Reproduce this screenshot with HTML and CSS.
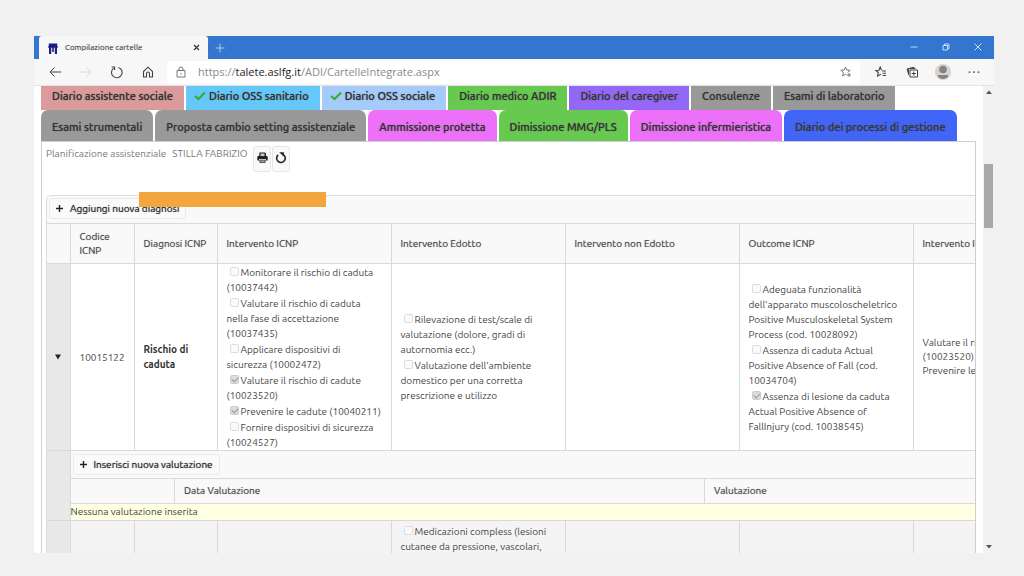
FILE: index.html
```html
<!DOCTYPE html>
<html lang="it">
<head>
<meta charset="utf-8">
<title>Compilazione cartelle</title>
<link rel="stylesheet" href="styles.css">
</head>
<body>
<div class="window">
  <header class="titlebar">
    <div class="browser-tab">
      <svg class="favicon" viewBox="0 0 10 12"><path d="M.8 1.500h8.400V4H.8zM.3 4h9.400v1.800H.3zM1 5.500h2.200V12H1zM4.200 5.500h1.600V10H4.200zM6.800 5.500H9V12H6.800z" fill="#1b1b86"/></svg>
      <span class="browser-tab-title">Compilazione cartelle</span>
      <button class="plain" aria-label="Chiudi scheda"><svg width="7" height="7" viewBox="0 0 7 7"><path d="M1 1l5 5M6 1L1 6" stroke="#333" stroke-width="1.200"/></svg></button>
    </div>
    <button class="plain new-tab" aria-label="Nuova scheda"><svg width="10" height="10" viewBox="0 0 10 10"><path d="M5 .5v9M.5 5h9" stroke="#a9cdf3"/></svg></button>
    <div class="window-controls">
      <button class="plain" aria-label="Riduci"><svg width="8" height="8" viewBox="0 0 8 8"><path d="M.5 4h7" stroke="#b9daf8"/></svg></button>
      <button class="plain" aria-label="Ripristina"><svg width="8" height="8" viewBox="0 0 8 8"><path d="M1 2.500h4.500V7H1zM2.500 2.500V1H7v4.500H5.500" fill="none" stroke="#c4e0fa"/></svg></button>
      <button class="plain" aria-label="Chiudi"><svg width="8" height="8" viewBox="0 0 8 8"><path d="M.5.5l7 7M7.500.5l-7 7" stroke="#c4e0fa"/></svg></button>
    </div>
  </header>
  <nav class="toolbar">
    <button class="plain" aria-label="Indietro"><svg width="12" height="12" viewBox="0 0 12 12"><path d="M12 6H1M5.500 1.500L1 6l4.500 4.500" fill="none" stroke="#444"/></svg></button>
    <button class="plain" aria-label="Avanti"><svg width="12" height="12" viewBox="0 0 12 12"><path d="M0 6h11M6.500 1.500L11 6l-4.500 4.500" fill="none" stroke="#d8d8d8"/></svg></button>
    <button class="plain" aria-label="Aggiorna"><svg width="13" height="13" viewBox="0 0 13 13"><path d="M3.600 2.200A5.300 5.300 0 1 0 8.400 1.400M1.600 1h3v3" fill="none" stroke="#444" stroke-width="1.100"/></svg></button>
    <button class="plain" aria-label="Pagina iniziale"><svg width="12" height="12" viewBox="0 0 12 12"><path d="M1.500 5.500L6 1.200l4.500 4.300V11h-3V7.500a1.500 1.500 0 0 0-3 0V11h-3z" fill="none" stroke="#444" stroke-width="1.100"/></svg></button>
    <div class="address">
      <svg width="10" height="12" viewBox="0 0 10 12"><path d="M1 4.500h8V11H1zM3 4.500V3a2 2 0 0 1 4 0v1.500" fill="none" stroke="#777"/><path d="M4.500 7h1v1.500h-1z" fill="#777"/></svg>
      <span class="url">https://<b>talete.aslfg.it</b>/ADI/CartelleIntegrate.aspx</span>
      <button class="plain" aria-label="Aggiungi ai preferiti"><svg width="12" height="12" viewBox="0 0 12 12"><path d="M5.500 1l1.300 3 3.400.3-2.600 2.200M5.500 1L4.200 4l-3.400.3 2.600 2.200-.8 3.500 2.900-1.800 1 .6M9 7v4M7 9h4" fill="none" stroke="#777"/></svg></button>
    </div>
    <div class="tools">
      <button class="plain" aria-label="Preferiti"><svg width="12" height="12" viewBox="0 0 12 12"><path d="M6.500 4.300L5.200 1 4 4.300.8 4.500l2.500 2-.8 3.500L6 8.200M7 5h4M7.500 7.200H11M7.500 9.500H11" fill="none" stroke="#444" stroke-width="1.100"/></svg></button>
      <button class="plain" aria-label="Raccolte"><svg width="12" height="12" viewBox="0 0 12 12"><path d="M4 4h7.500v7H4zM7.800 5.500v4M5.800 7.500h4M2.800 8.800L1 3l7-1.800.5 1.500M2.500 9V2.600h7" fill="none" stroke="#444"/></svg></button>
      <button class="plain" aria-label="Profilo"><svg width="16" height="16" viewBox="0 0 16 16"><circle cx="8" cy="8" r="8" fill="#d6d3d0"/><circle cx="8" cy="5.500" r="3.800" fill="#858280"/><path d="M3 11h10v2Q8 17 3 13z" fill="#858280"/></svg></button>
      <button class="plain" aria-label="Altro"><svg width="12" height="4" viewBox="0 0 12 4"><path d="M.5 1.500h2v1.300h-2zM5 1.500h2v1.300H5zM9.500 1.500h2v1.300h-2z" fill="#555"/></svg></button>
    </div>
  </nav>
  <div class="viewport">
    <main class="page">
      <nav class="tabs tabs-upper">
        <a href="#" class="tab rose">Diario assistente sociale</a>
        <a href="#" class="tab sky"><svg class="check" viewBox="0 0 12 10"><path d="M1 5l3.500 3L11 1.500" fill="none" stroke="#35ad35" stroke-width="2.200"/></svg>Diario OSS sanitario</a>
        <a href="#" class="tab pale"><svg class="check" viewBox="0 0 12 10"><path d="M1 5l3.500 3L11 1.500" fill="none" stroke="#35ad35" stroke-width="2.200"/></svg>Diario OSS sociale</a>
        <a href="#" class="tab green">Diario medico ADIR</a>
        <a href="#" class="tab violet">Diario del caregiver</a>
        <a href="#" class="tab grey">Consulenze</a>
        <a href="#" class="tab grey">Esami di laboratorio</a>
      </nav>
      <nav class="tabs tabs-lower">
        <a href="#" class="tab grey">Esami strumentali</a>
        <a href="#" class="tab grey">Proposta cambio setting assistenziale</a>
        <a href="#" class="tab pink">Ammissione protetta</a>
        <a href="#" class="tab green">Dimissione MMG/PLS</a>
        <a href="#" class="tab pink">Dimissione infermieristica</a>
        <a href="#" class="tab blue">Diario dei processi di gestione</a>
      </nav>
      <section class="panel">
        <div class="patient">
          <span>Planificazione assistenziale</span>
          <span>STILLA FABRIZIO</span>
          <div class="patient-actions">
            <button class="icon-button" aria-label="Stampa"><svg width="11" height="11" viewBox="0 0 11 11"><path d="M2.500.5h5.500l1 1V4h-7zM.3 5q0-1 1-1h8.400q1 0 1 1v3.500H9V7H2v1.500H.3zM2.500 7.700h6v3h-6z" fill="#222"/><path d="M3.500 1.500h4V4h-4zM3.300 8.500h4.400v1.200H3.300z" fill="#ccc"/></svg></button>
            <button class="icon-button" aria-label="Ricarica"><svg width="12" height="12" viewBox="0 0 12 12"><path d="M7.500 2.200A4.300 4.300 0 1 1 3.200 2.900" fill="none" stroke="#222" stroke-width="1.600"/><path d="M4.200.2h4.600v4.200z" fill="#222"/></svg></button>
          </div>
        </div>
        <div class="grid">
          <div class="grid-bar">
            <button class="add"><svg width="7" height="7" viewBox="0 0 7 7"><path d="M3.500 0v7M0 3.500h7" stroke="#222" stroke-width="1.400"/></svg>Aggiungi nuova diagnosi</button>
            <div class="redaction"></div>
          </div>
          <table class="diagnoses">
            <colgroup><col class="c-toggle"><col class="c-code"><col class="c-diagnosis"><col class="c-wide"><col class="c-wide"><col class="c-wide"><col class="c-wide"><col class="c-wide"></colgroup>
            <thead>
              <tr><th></th><th>Codice ICNP</th><th class="nowrap">Diagnosi ICNP</th><th>Intervento ICNP</th><th>Intervento Edotto</th><th>Intervento non Edotto</th><th>Outcome ICNP</th><th>Intervento ICNP</th></tr>
            </thead>
            <tbody>
              <tr>
                <td class="toggle"><button class="plain" aria-label="Comprimi"><svg width="6" height="6" viewBox="0 0 6 6"><path d="M0 .5h6L3 5.500z" fill="#222"/></svg></button></td>
                <td>10015122</td>
                <td><strong>Rischio di caduta</strong></td>
                <td>
                  <label><input type="checkbox" disabled>Monitorare il rischio di caduta (10037442)</label>
                  <label><input type="checkbox" disabled>Valutare il rischio di caduta nella fase di accettazione (10037435)</label>
                  <label><input type="checkbox" disabled>Applicare dispositivi di sicurezza (10002472)</label>
                  <label><input type="checkbox" disabled checked>Valutare il rischio di cadute (10023520)</label>
                  <label><input type="checkbox" disabled checked>Prevenire le cadute (10040211)</label>
                  <label><input type="checkbox" disabled>Fornire dispositivi di sicurezza (10024527)</label>
                </td>
                <td>
                  <label><input type="checkbox" disabled>Rilevazione di test/scale di valutazione (dolore, gradi di autornomia ecc.)</label>
                  <label><input type="checkbox" disabled>Valutazione dell'ambiente domestico per una corretta prescrizione e utilizzo</label>
                </td>
                <td></td>
                <td>
                  <label><input type="checkbox" disabled>Adeguata funzionalità dell'apparato muscoloscheletrico Positive Musculoskeletal System Process (cod. 10028092)</label>
                  <label><input type="checkbox" disabled>Assenza di caduta Actual Positive Absence of Fall (cod. 10034704)</label>
                  <label><input type="checkbox" disabled checked>Assenza di lesione da caduta Actual Positive Absence of FallInjury (cod. 10038545)</label>
                </td>
                <td class="nowrap">Valutare il rischio di cadute<br>(10023520)<br>Prevenire le cadute</td>
              </tr>
              <tr>
                <td class="toggle"></td>
                <td class="detail" colspan="7">
                  <div class="detail-bar">
                    <button class="add"><svg width="7" height="7" viewBox="0 0 7 7"><path d="M3.500 0v7M0 3.500h7" stroke="#222" stroke-width="1.400"/></svg>Inserisci nuova valutazione</button>
                  </div>
                  <table class="evaluations">
                    <colgroup><col class="c-actions"><col class="c-date"><col></colgroup>
                    <thead><tr><th></th><th>Data Valutazione</th><th>Valutazione</th></tr></thead>
                    <tbody><tr><td colspan="3" class="empty">Nessuna valutazione inserita</td></tr></tbody>
                  </table>
                </td>
              </tr>
              <tr class="alternate">
                <td class="toggle"></td><td></td><td></td><td></td>
                <td><label><input type="checkbox" disabled>Medicazioni compless (lesioni cutanee da pressione, vascolari,</label></td>
                <td></td><td></td><td></td>
              </tr>
            </tbody>
          </table>
        </div>
      </section>
    </main>
    <div class="scrollbar">
      <svg width="6" height="4" viewBox="0 0 6 4"><path d="M0 4l3-3.500L6 4z" fill="#555"/></svg>
      <div class="thumb"></div>
      <svg class="down" width="6" height="4" viewBox="0 0 6 4"><path d="M0 0l3 3.500L6 0z" fill="#555"/></svg>
    </div>
  </div>
</div>
</body>
</html>
```
FILE: styles.css
```css
* { box-sizing: border-box; }

body {
  margin: 0;
  height: 100vh;
  padding: 36px 30px 23px 34px;
  background: #f1f1f1;
  color: #444;
  font: 10px/15px Ubuntu, "Noto Sans", sans-serif;
  overflow: hidden;
}

button, input { font: inherit; color: inherit; margin: 0; }
svg { display: block; flex: none; }
.plain { display: flex; align-items: center; justify-content: center; border: 0; padding: 0; background: none; }

.window { height: 100%; display: flex; flex-direction: column; background: #fff; overflow: hidden; }

/* Browser chrome */
.titlebar { display: flex; flex: none; height: 23px; padding-left: 5px; background: #3375cf; }
.browser-tab { display: flex; align-items: center; width: 169px; padding: 0 8px 0 9px; background: #f7f7f7; border-radius: 3px 3px 0 0; }
.favicon { width: 10px; height: 12px; }
.browser-tab-title { flex: 1; margin-left: 7px; font-size: 8px; color: #444; text-shadow: 0 0 1px #aaa; }
.new-tab { width: 23px; }
.window-controls { display: flex; margin-left: auto; padding-bottom: 2px; }
.window-controls .plain { width: 32px; }

.toolbar { display: flex; flex: none; align-items: center; height: 27px; padding-left: 5px; background: #f7f7f7; border-bottom: 1px solid #e2e2e2; }
.toolbar > .plain { width: 31px; }
.address { display: flex; flex: 1; align-items: center; height: 23px; margin-left: 4px; padding: 0 8px 0 9px; background: #fff; border-radius: 3px; }
.url { flex: 1; margin-left: 12px; font: 11px/16px "Open Sans", sans-serif; color: #8a8a8a; }
.url b { font-weight: 400; color: #222; }
.tools { display: flex; margin: 0 5px; }
.tools .plain { width: 31px; }

.viewport { display: flex; flex: 1; min-height: 0; }
.page { display: flex; flex: 1; flex-direction: column; min-width: 0; padding: 0 7px; }
.scrollbar { display: flex; flex-direction: column; align-items: center; width: 11px; padding: 4px 0; background: #f1f1f1; }
.thumb { width: 9px; height: 64px; margin-top: 70px; background: #a8a8a8; }
.down { margin-top: auto; }

/* Section tabs */
.tabs { display: flex; flex: none; gap: 2px; }
.tab { display: flex; align-items: center; padding: 0 11px; color: #333; font-size: 11px; font-weight: 500; white-space: nowrap; text-decoration: none; text-shadow: 0 0 1px #555; }
.tabs-upper .tab { height: 24px; padding-bottom: 4px; }
.tabs-lower .tab { height: 31px; padding-top: 3px; border-radius: 7px 7px 0 0; }
.check { width: 12px; height: 10px; margin: 0 3px 0 -3px; }
.rose { background: #dc9b9b; }
.sky { background: #66c8f8; }
.pale { background: #a4cbfa; }
.green { background: #67c94f; }
.violet { background: #9368f6; }
.grey { background: #999; }
.pink { background: #ec70f8; }
.blue { background: #4165f6; }

/* Care plan */
.panel { flex: 1; min-height: 0; padding: 4px 0 0 4px; border: solid #ccced2; border-width: 1px 1px 0; overflow: hidden; }
.patient { display: flex; gap: 6px; height: 49px; color: #777; }
.patient-actions { display: flex; gap: 1px; align-self: flex-start; }
.icon-button { display: flex; align-items: center; justify-content: center; width: 18px; height: 26px; padding: 0 0 3px; border: 1px solid #e6e6e6; border-radius: 3px; background: #f9f9f9; }

.grid { border: solid #ddd; border-width: 1px 0 0 1px; border-radius: 5px 0 0; }
.grid-bar { position: relative; height: 27px; padding: 2px 0 0 2px; background: #f9f9f9; border-radius: 5px 0 0; }
.add { display: flex; align-items: center; gap: 7px; height: 21px; padding: 0 6px; border: 1px solid #eaeaea; border-radius: 3px; background: #fafafa; color: #222; text-shadow: 0 0 1px #666; }
.redaction { position: absolute; top: -4px; left: 92px; width: 187px; height: 15px; background: #f2a63c; }

table { border-collapse: collapse; table-layout: fixed; }
.diagnoses { width: 1040px; }
.c-toggle { width: 23px; }
.c-code { width: 64px; }
.c-diagnosis { width: 83px; }
.c-wide { width: 174px; }
th, td { border: 1px solid #d9d9d9; padding: 0 9px; text-align: left; vertical-align: middle; }
th { background: #f9f9f9; font-weight: 400; line-height: 14px; text-shadow: 0 0 1px #999; }
.diagnoses > thead th { height: 40px; }
.diagnoses td:first-child, .diagnoses th:first-child { border-left: 0; }
.diagnoses td { background: #fff; }
.diagnoses .toggle { padding: 0 8px; background: #e8e8e8; }
strong { color: #333; }
label { display: block; padding-top: 1px; }
input[type="checkbox"] { appearance: none; width: 9px; height: 9px; margin: 0 2px 0 3px; border: 1px solid #ddd; border-radius: 2px; background: #fafafa; }
input[type="checkbox"]:checked { background: #ddd; border-color: #ccc; }
input[type="checkbox"]:checked::before { content: ""; display: block; width: 5px; height: 3px; margin: 1px; border: solid #999; border-width: 0 0 1px 1px; transform: rotate(-45deg); }
.nowrap { white-space: nowrap; line-height: 14px; }

.diagnoses .detail { padding: 0; background: #f9f9f9; }
.detail-bar { height: 27px; padding: 3px 2px; }
.evaluations { width: 100%; }
.c-actions { width: 104px; }
.c-date { width: 530px; }
.evaluations th { height: 25px; }
.diagnoses .empty { height: 16px; padding: 0; background: #ffffe1; border-width: 0; }
.diagnoses .alternate td { padding-top: 2px; padding-bottom: 2px; background: #f4f4f4; }
.diagnoses .alternate .toggle { background: #e8e8e8; }
```
